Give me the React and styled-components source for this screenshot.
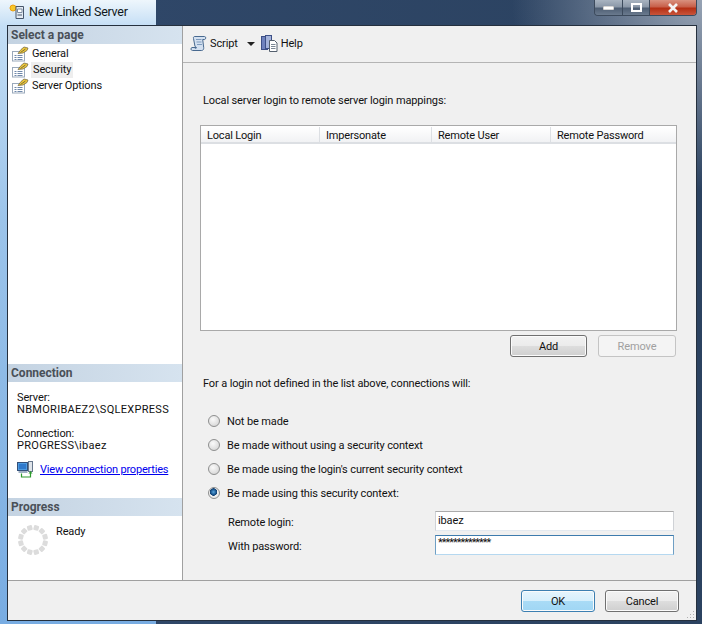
import React from "react";
import styled, { createGlobalStyle } from "styled-components";

const GlobalStyle = createGlobalStyle`
  html, body {
    margin: 0;
    padding: 0;
    background: #2c4260;
  }
  * {
    box-sizing: border-box;
  }
`;

const Window = styled.div`
  width: 702px;
  height: 624px;
  overflow: hidden;
  display: flex;
  flex-direction: column;
  padding: 0 5px 3px 7px;
  font-family: Roboto, "Liberation Sans", Arial, sans-serif;
  font-size: 11px;
  letter-spacing: -0.13px;
  color: #111;
  background:
    linear-gradient(#eef6fc 0, #c4def5 26px, #9cc4ea 220px, #78ace2 100%) 0 0 / 156px 100% no-repeat,
    radial-gradient(circle at 100% 0, rgba(170, 180, 195, 0.85) 0, rgba(170, 180, 195, 0) 190px),
    linear-gradient(90deg, #30486a 0, #2b4260 100%);
`;

const TitleBar = styled.div`
  height: 25px;
  flex: none;
  display: flex;
  align-items: flex-start;
  padding-left: 1px;
`;

const TitleIcon = styled.svg`
  width: 17px;
  height: 17px;
  margin-top: 3px;
  flex: none;
`;

const TitleText = styled.span`
  margin: 4px 0 0 4px;
  font-size: 12.5px;
  letter-spacing: -0.25px;
  line-height: 15px;
  color: #101820;
  flex: 1;
`;

const Controls = styled.div`
  display: flex;
  width: 103px;
  height: 16px;
  border: 1px solid #3c4a5c;
  border-top: none;
  border-radius: 0 0 4px 4px;
  overflow: hidden;
`;

const ControlButton = styled.div`
  width: ${(p) => p.$w}px;
  display: flex;
  align-items: center;
  justify-content: center;
  border-right: 1px solid #3c4a5c;
  background: ${(p) =>
    p.$close
      ? "linear-gradient(#d9917f 0, #c8604a 45%, #b52f14 55%, #c9543a 100%)"
      : "linear-gradient(#a9b4c1 0, #8b98a8 45%, #4f5f74 55%, #6a7a8e 100%)"};

  &:last-child {
    border-right: none;
  }
`;

const Dialog = styled.div`
  flex: 1;
  min-height: 0;
  display: flex;
  flex-direction: column;
  border: 1px solid #25303e;
  background: #f0f0f0;
`;

const Body = styled.div`
  flex: 1;
  min-height: 0;
  display: flex;
  border-bottom: 1px solid #a0a0a0;
`;

const Sidebar = styled.div`
  width: 175px;
  flex: none;
  display: flex;
  flex-direction: column;
  background: #fff;
  border-right: 1px solid #a0a0a0;
`;

const SectionHeader = styled.div`
  height: 18px;
  flex: none;
  padding-left: 3px;
  font-size: 12px;
  font-weight: bold;
  letter-spacing: 0;
  line-height: 18px;
  color: #4a5058;
  background: linear-gradient(90deg, #c4d3e2, #d6e3ef);
`;

const PageList = styled.div`
  flex: 1;
  padding-top: 2px;
`;

const PageRow = styled.div`
  height: 16px;
  display: flex;
  align-items: center;
  padding-left: 4px;
`;

const PageIcon = styled.svg`
  width: 17px;
  height: 16px;
  flex: none;
`;

const PageLabel = styled.span`
  margin-left: 2px;
  padding: 0 2px 0 ${(p) => (p.$selected ? 2 : 1)}px;
  line-height: 16px;
  background: ${(p) => (p.$selected ? "#eeeeee" : "transparent")};
`;

const ConnectionBox = styled.div`
  height: 116px;
  flex: none;
  padding: 10px 0 0 9px;
  line-height: 12px;
`;

const InfoLine = styled.div`
  margin-bottom: ${(p) => p.$gap || 0}px;
  letter-spacing: ${(p) => (p.$wide ? "0.3px" : "inherit")};
`;

const LinkRow = styled.div`
  display: flex;
  align-items: center;
  gap: 6px;
  margin-top: 9px;
`;

const Link = styled.a`
  color: #0000ee;
  text-decoration: underline;
  letter-spacing: -0.2px;
  line-height: 16px;
`;

const ProgressBox = styled.div`
  height: 64px;
  flex: none;
  display: flex;
  padding: 8px 0 0 9px;
`;

const ReadyText = styled.span`
  margin: 1px 0 0 7px;
  line-height: 14px;
`;

const Main = styled.div`
  flex: 1;
  min-width: 0;
  display: flex;
  flex-direction: column;
`;

const Toolbar = styled.div`
  height: 37px;
  flex: none;
  display: flex;
  align-items: center;
  padding: 0 0 1px 7px;
  border-bottom: 1px solid #b4b4b4;
`;

const ToolIcon = styled.svg`
  width: 17px;
  height: 17px;
  flex: none;
`;

const ToolText = styled.span`
  margin-left: 3px;
`;

const Caret = styled.span`
  width: 0;
  height: 0;
  margin: 1px 6px 0 9px;
  border-left: 4px solid transparent;
  border-right: 4px solid transparent;
  border-top: 4px solid #222;
`;

const Content = styled.div`
  flex: 1;
  padding: 31px 19px 0 17px;
`;

const Caption = styled.div`
  padding-left: 3px;
  line-height: 14px;
  margin-top: ${(p) => p.$top || 0}px;
`;

const Grid = styled.div`
  height: 206px;
  margin-top: 17px;
  background: #fff;
  border: 1px solid #a9a9a9;
`;

const GridHeader = styled.div`
  display: grid;
  grid-template-columns: 119px 112px 119px 1fr;
  height: 17px;
  margin-top: 1px;
  border-bottom: 2px solid #dcdfe3;
  background: linear-gradient(#ffffff, #f1f2f4);
  letter-spacing: -0.18px;
`;

const GridColumn = styled.div`
  padding-left: 6px;
  line-height: 17px;
  border-right: 1px solid #dcdfe3;

  &:last-child {
    border-right: none;
  }
`;

const ButtonRow = styled.div`
  display: flex;
  justify-content: flex-end;
  gap: 11px;
  margin-top: 4px;
  padding-right: 1px;
`;

const Button = styled.div`
  width: ${(p) => p.$w || 78}px;
  height: 22px;
  display: flex;
  align-items: center;
  justify-content: center;
  border-radius: 3px;
  border: 1px solid ${(p) => (p.$default ? "#3c7fb1" : p.$disabled ? "#c4c4c4" : "#707070")};
  color: ${(p) => (p.$disabled ? "#a0a0a0" : "#111")};
  box-shadow: inset 0 0 0 1px ${(p) => (p.$disabled ? "#f4f4f4" : "#fbfbfb")};
  background: ${(p) =>
    p.$default
      ? "linear-gradient(#e6f5fd 0, #d6effc 50%, #a9dbf6 52%, #a0d6f4 100%)"
      : p.$disabled
      ? "#f4f4f4"
      : "linear-gradient(#f2f2f2 0, #ebebeb 50%, #dddddd 52%, #cfcfcf 100%)"};
`;

const RadioGroup = styled.div`
  display: flex;
  flex-direction: column;
  gap: 8px;
  margin-top: 22px;
  padding-left: 8px;
`;

const RadioRow = styled.div`
  height: 16px;
  display: flex;
  align-items: center;
  gap: 7px;
`;

const Radio = styled.span`
  width: 12px;
  height: 12px;
  flex: none;
  border-radius: 50%;
  border: 1px solid #8e8f8f;
  background: ${(p) =>
    p.$checked
      ? "radial-gradient(circle at 45% 40%, #5ba7df 0, #1c5a94 2.5px, #123f70 3.5px, #f0f0f0 4px, #e4e4e4 100%)"
      : "radial-gradient(circle at 40% 35%, #fafafa 0, #dcdcdc 70%, #cfcfcf 100%)"};
`;

const CredentialRow = styled.div`
  height: 20px;
  display: flex;
  align-items: center;
  margin-top: ${(p) => p.$top}px;
  padding-left: 28px;
`;

const CredentialLabel = styled.span`
  width: 207px;
  flex: none;
  padding-top: 2px;
`;

const TextField = styled.div`
  width: 239px;
  height: 20px;
  flex: none;
  padding: ${(p) => (p.$focused ? "0" : "2px")} 0 0 2px;
  background: #fff;
  border: 1px solid ${(p) => (p.$focused ? "#6f9fc4" : "#cfd2d6")};
  border-top-color: ${(p) => (p.$focused ? "#3d7bad" : "#ababab")};
  border-bottom-color: ${(p) => (p.$focused ? "#b5d8f0" : "#e3e9ef")};
  letter-spacing: ${(p) => (p.$focused ? "-1px" : "inherit")};
  line-height: 14px;
`;

const Footer = styled.div`
  height: 39px;
  flex: none;
  display: flex;
  justify-content: flex-end;
  gap: 10px;
  padding: 9px 17px 0 0;
  position: relative;
`;

const Grip = styled.svg`
  position: absolute;
  right: 1px;
  bottom: 1px;
  width: 10px;
  height: 10px;
`;

function AppIcon() {
  return (
    <TitleIcon viewBox="0 0 17 17">
      <circle cx="5" cy="5" r="3" fill="#f7c92c" stroke="#ee9f12" />
      <path d="M8 3.500h7.500v12H8z" fill="#e4ebf3" stroke="#47566b" />
      <path d="M9.500 6h4.500v3.500H9.500z" fill="#fff" stroke="#7d8da1" />
      <path d="M9.500 12h4.500" stroke="#47566b" />
    </TitleIcon>
  );
}

function SheetIcon() {
  return (
    <PageIcon viewBox="0 0 17 16">
      <rect x="0.500" y="5.500" width="12" height="9.500" fill="#fff" stroke="#9aa9bb" />
      <path d="M2.500 9.500h2M5.500 9.500h5M2.500 11.500h2M5.500 11.500h5M2.500 13.500h2M5.500 13.500h5" stroke="#6f88aa" />
      <path d="M6 7.500l3-4 3-2.500 4 1-1 2.500-4 2.500z" fill="#efc83a" stroke="#6b6240" strokeWidth="0.700" />
      <path d="M8.500 6.500l5-3.500" stroke="#4a4a38" strokeWidth="0.700" />
    </PageIcon>
  );
}

function ScriptIcon() {
  return (
    <ToolIcon viewBox="0 0 17 17">
      <path
        d="M4.500 1.500h10c1.500 0 1.800 2.500.2 3h-2l1 8c.2 1.500-.5 3-2 3H2.500c-1.700 0-2.200-2.500-.5-3h4.500l-1.500-1-1.500-8c-.3-1 .2-2 1-2z"
        fill="#d3e0f0"
        stroke="#48698f"
      />
      <path d="M6 4.500h5.500M6.500 7h5M7 9.500h5" stroke="#7e9bbd" />
      <path d="M3 12.500c2 0 3 .5 3 1.500" fill="none" stroke="#48698f" />
    </ToolIcon>
  );
}

function HelpIcon() {
  return (
    <ToolIcon viewBox="0 0 17 17">
      <rect x="0.500" y="1.500" width="6" height="13" fill="#6f82bd" stroke="#3d4f86" />
      <rect x="4.500" y="0.500" width="6" height="13" fill="#a4b3da" stroke="#3d4f86" />
      <path d="M8.500 5.500h5l2.500 2.500v8.500H8.500z" fill="#fff" stroke="#55606e" />
      <path d="M10 9.500h4.500M10 11.500h4.500M10 13.500h4.500" stroke="#7c8794" />
    </ToolIcon>
  );
}

function ConnectionIcon() {
  return (
    <svg width="17" height="17" viewBox="0 0 17 17" style={{ flex: "none" }}>
      <rect x="0.500" y="1.500" width="10" height="8" fill="#4d9be0" stroke="#33507a" />
      <rect x="2" y="3" width="7" height="5" fill="#2f79cc" />
      <rect x="1.500" y="10" width="9" height="2" fill="#9fb0c4" />
      <rect x="11.500" y="0.500" width="4" height="10" fill="#dfe4ea" stroke="#67778c" />
      <path d="M4.500 12.500v3.500h9v-4" fill="none" stroke="#2f9a2f" strokeWidth="1.200" />
      <path d="M11.500 12.500l2-2.500 2 2.500z" fill="#2f9a2f" />
    </svg>
  );
}

function Spinner() {
  return (
    <svg width="32" height="32" viewBox="-16 -16 32 32" style={{ flex: "none" }}>
      {Array.from({ length: 12 }).map((_, i) => (
        <rect key={i} x="-2.600" y="-15" width="5.200" height="5" rx="1" fill="#dcdcdc" transform={`rotate(${i * 30 + 15})`} />
      ))}
    </svg>
  );
}

export default function App() {
  return (
    <>
      <GlobalStyle />
      <Window>
        <TitleBar>
          <AppIcon />
          <TitleText>New Linked Server</TitleText>
          <Controls>
            <ControlButton $w={29}>
              <svg width="11" height="4">
                <rect width="11" height="4" fill="#fff" stroke="#555" strokeWidth="0.500" />
              </svg>
            </ControlButton>
            <ControlButton $w={27}>
              <svg width="11" height="9">
                <rect x="1" y="1" width="9" height="7" fill="none" stroke="#fff" strokeWidth="2" />
              </svg>
            </ControlButton>
            <ControlButton $w={47} $close>
              <svg width="12" height="10" viewBox="0 0 12 10">
                <path d="M2 1l8 8M10 1L2 9" stroke="#f4f4f4" strokeWidth="2.600" />
              </svg>
            </ControlButton>
          </Controls>
        </TitleBar>
        <Dialog>
          <Body>
            <Sidebar>
              <SectionHeader>Select a page</SectionHeader>
              <PageList>
                <PageRow>
                  <SheetIcon />
                  <PageLabel>General</PageLabel>
                </PageRow>
                <PageRow>
                  <SheetIcon />
                  <PageLabel $selected>Security</PageLabel>
                </PageRow>
                <PageRow>
                  <SheetIcon />
                  <PageLabel>Server Options</PageLabel>
                </PageRow>
              </PageList>
              <SectionHeader>Connection</SectionHeader>
              <ConnectionBox>
                <InfoLine>Server:</InfoLine>
                <InfoLine $gap={12} $wide>NBMORIBAEZ2\SQLEXPRESS</InfoLine>
                <InfoLine>Connection:</InfoLine>
                <InfoLine $wide>PROGRESS\ibaez</InfoLine>
                <LinkRow>
                  <ConnectionIcon />
                  <Link href="#">View connection properties</Link>
                </LinkRow>
              </ConnectionBox>
              <SectionHeader>Progress</SectionHeader>
              <ProgressBox>
                <Spinner />
                <ReadyText>Ready</ReadyText>
              </ProgressBox>
            </Sidebar>
            <Main>
              <Toolbar>
                <ScriptIcon />
                <ToolText>Script</ToolText>
                <Caret />
                <HelpIcon />
                <ToolText>Help</ToolText>
              </Toolbar>
              <Content>
                <Caption>Local server login to remote server login mappings:</Caption>
                <Grid>
                  <GridHeader>
                    <GridColumn>Local Login</GridColumn>
                    <GridColumn>Impersonate</GridColumn>
                    <GridColumn>Remote User</GridColumn>
                    <GridColumn>Remote Password</GridColumn>
                  </GridHeader>
                </Grid>
                <ButtonRow>
                  <Button $w={77}>Add</Button>
                  <Button $disabled>Remove</Button>
                </ButtonRow>
                <Caption $top={20}>For a login not defined in the list above, connections will:</Caption>
                <RadioGroup>
                  <RadioRow>
                    <Radio />
                    Not be made
                  </RadioRow>
                  <RadioRow>
                    <Radio />
                    Be made without using a security context
                  </RadioRow>
                  <RadioRow>
                    <Radio />
                    Be made using the login's current security context
                  </RadioRow>
                  <RadioRow>
                    <Radio $checked />
                    Be made using this security context:
                  </RadioRow>
                </RadioGroup>
                <CredentialRow $top={10}>
                  <CredentialLabel>Remote login:</CredentialLabel>
                  <TextField>ibaez</TextField>
                </CredentialRow>
                <CredentialRow $top={4}>
                  <CredentialLabel>With password:</CredentialLabel>
                  <TextField $focused>**************</TextField>
                </CredentialRow>
              </Content>
            </Main>
          </Body>
          <Footer>
            <Button $w={74} $default>OK</Button>
            <Button $w={74}>Cancel</Button>
            <Grip viewBox="0 0 10 10">
              <path d="M8 2h1v1H8zM5 5h1v1H5zM8 5h1v1H8zM2 8h1v1H2zM5 8h1v1H5zM8 8h1v1H8z" fill="#b0b0b0" />
            </Grip>
          </Footer>
        </Dialog>
      </Window>
    </>
  );
}
